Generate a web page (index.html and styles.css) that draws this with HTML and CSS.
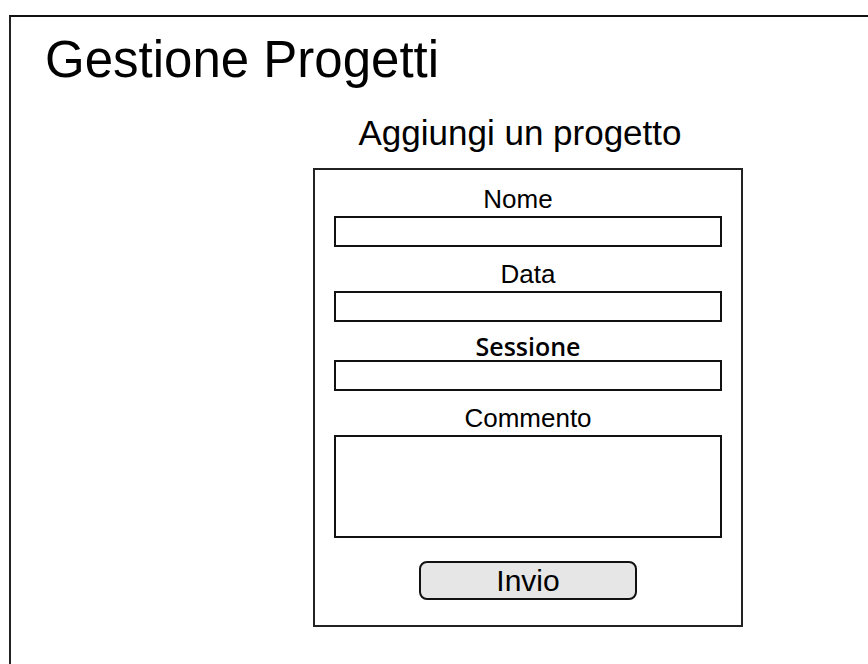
FILE: index.html
```html
<!DOCTYPE html>
<html lang="it">

<head>
    <meta charset="UTF-8">
    <meta name="viewport" content="width=device-width, initial-scale=1.0">
    <title>Gestione Progetti</title>
    <link rel="stylesheet" href="styles.css">
</head>

<body>

    <div class="frame">
        <h1>Gestione Progetti</h1>

        <!-- Nuovo progetto -->
        <div class="panel">
            <h2>Aggiungi un progetto</h2>
            <form class="project-form" id="projectForm">
                <label for="nome" class="label-first">Nome</label>
                <input type="text" id="nome" name="nome">

                <label for="data">Data</label>
                <input type="text" id="data" name="data">

                <label for="sessione" class="label-strong">Sessione</label>
                <input type="text" id="sessione" name="sessione">

                <label for="commento">Commento</label>
                <textarea id="commento" name="commento"></textarea>

                <button type="submit">Invio</button>
            </form>
        </div>
    </div>

</body>

</html>
```

FILE: styles.css
```css
/* Reset */
* {
    margin: 0;
    padding: 0;
    box-sizing: border-box;
}

body {
    font-family: 'Liberation Sans', Arial, sans-serif;
    background-color: #fff;
    color: #000;
    overflow: hidden;
    height: 664px;
}

/* Outer wireframe (runs off the right and bottom edges) */
.frame {
    margin: 15px 0 0 9px;
    height: 649px;
    border-top: 2px solid #111;
    border-left: 2px solid #222;
    padding: 14px 0 0 34px;
}

h1 {
    font-size: 51px;
    font-weight: normal;
    line-height: 58px;
}

/* Form panel */
.panel {
    width: 430px;
    margin: 24px 0 0 268px;
}

h2 {
    font-size: 35px;
    font-weight: normal;
    line-height: 40px;
    text-align: center;
    padding-right: 16px;
    margin-bottom: 15px;
}

.project-form {
    display: flex;
    flex-direction: column;
    border: 2px solid #222;
    padding: 12px 19px 25px;
}

label {
    font-size: 26px;
    line-height: 34px;
    text-align: center;
}

.label-first {
    padding-right: 20px;
}

.label-strong {
    font-family: 'Open Sans', sans-serif;
    font-size: 25px;
    font-weight: 600;
    line-height: 28px;
}

input,
textarea {
    height: 31px;
    margin-bottom: 10px;
    border: 2px solid #111;
    background-color: #fff;
    font-family: inherit;
    font-size: 16px;
    resize: none;
}

textarea {
    height: 103px;
    margin-bottom: 23px;
}

button {
    align-self: center;
    width: 218px;
    height: 39px;
    border: 2px solid #111;
    border-radius: 8px;
    background-color: #e6e6e6;
    font-family: inherit;
    font-size: 30px;
    line-height: 34px;
    color: #000;
    cursor: pointer;
}
```
